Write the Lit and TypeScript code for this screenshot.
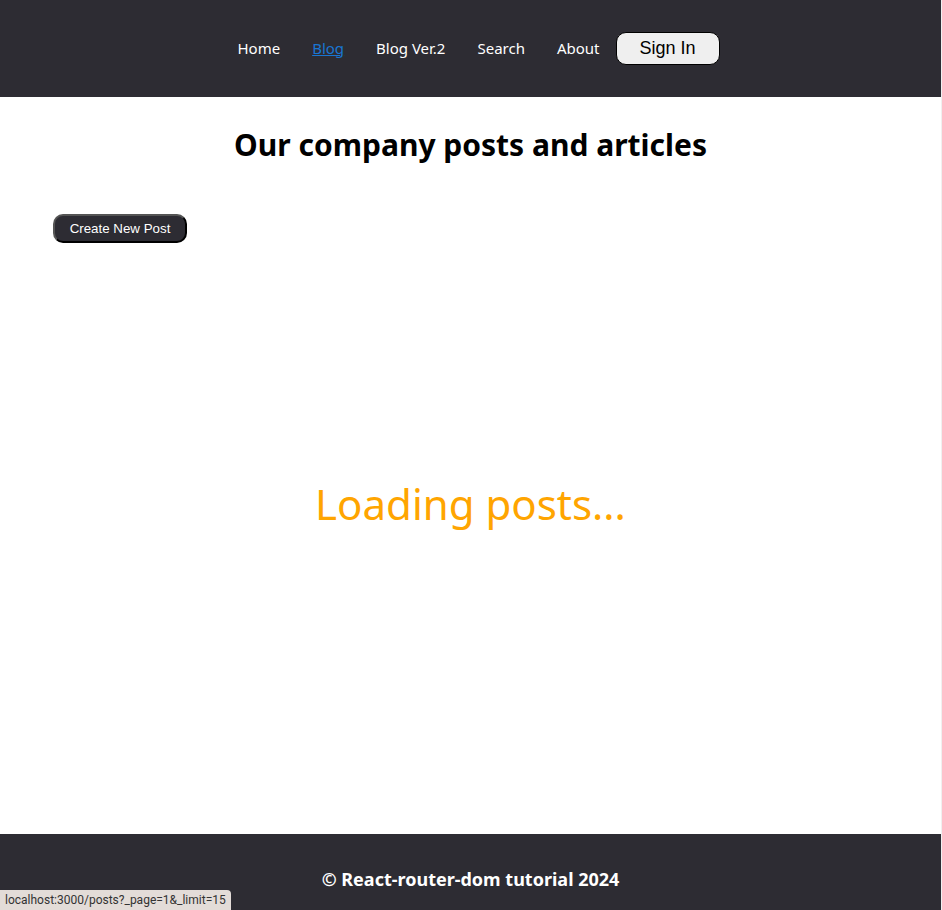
import { LitElement, html, css } from "lit";
import { customElement } from "lit/decorators.js";

@customElement("app-root")
export class AppRoot extends LitElement {
  static styles = css`
    :host {
      display: flex;
      flex-direction: column;
      box-sizing: border-box;
      min-height: 100vh;
      border-right: 1px solid #f0f0f0;
      background: #fff;
      color: #000;
      font-family: "Segoe UI", "Noto Sans", "Open Sans", sans-serif;
      font-size: 15px;
    }
    header {
      display: flex;
      align-items: center;
      justify-content: center;
      padding: 32px 16px;
      background: #2d2c33;
    }
    nav {
      display: flex;
      gap: 32px;
      padding: 0 16px 2px;
      line-height: 20px;
    }
    nav a {
      color: #fff;
      text-decoration: none;
    }
    nav a.active {
      color: #1976d2;
      text-decoration: underline;
    }
    .sign-in {
      width: 104px;
      height: 33px;
      padding: 0;
      border: 1px solid #000;
      border-radius: 10px;
      background: #efefef;
      color: #000;
      font: 18px "Liberation Sans", sans-serif;
    }
    main {
      flex: 1;
      display: flex;
      flex-direction: column;
      padding: 24px 53px;
    }
    h1 {
      margin: 0;
      text-align: center;
      font-size: 30px;
      line-height: 48px;
    }
    .create {
      align-self: flex-start;
      width: 134px;
      height: 29px;
      margin-top: 45px;
      padding: 0;
      border: 2px outset #000;
      border-radius: 10px;
      background: #2d2c33;
      color: #fff;
      font-family: "Liberation Sans", sans-serif;
    }
    .loading {
      flex: 1;
      display: flex;
      align-items: center;
      justify-content: center;
      margin: 0;
      padding-bottom: 46px;
      color: orange;
      font-size: 42px;
      line-height: 60px;
    }
    footer {
      padding: 32px 0 18px;
      background: #2d2c33;
      color: #fff;
      text-align: center;
      font-size: 18px;
      line-height: 26px;
      font-weight: 700;
    }
    .status {
      position: fixed;
      left: 0;
      bottom: 0;
      padding: 0 5px;
      border-radius: 0 4px 0 0;
      background: #e3dcd8;
      color: #333;
      font-family: "Segoe UI", Roboto, sans-serif;
      font-size: 12px;
      line-height: 20px;
    }
  `;

  render() {
    return html`
      <header>
        <nav>
          <a href="#home">Home</a>
          <a class="active" href="#blog">Blog</a>
          <a href="#blog2">Blog Ver.2</a>
          <a href="#search">Search</a>
          <a href="#about">About</a>
        </nav>
        <button class="sign-in">Sign In</button>
      </header>
      <main>
        <h1>Our company posts and articles</h1>
        <button class="create">Create New Post</button>
        <p class="loading">Loading posts...</p>
      </main>
      <footer>© React-router-dom tutorial 2024</footer>
      <div class="status">localhost:3000/posts?_page=1&amp;_limit=15</div>
    `;
  }
}
